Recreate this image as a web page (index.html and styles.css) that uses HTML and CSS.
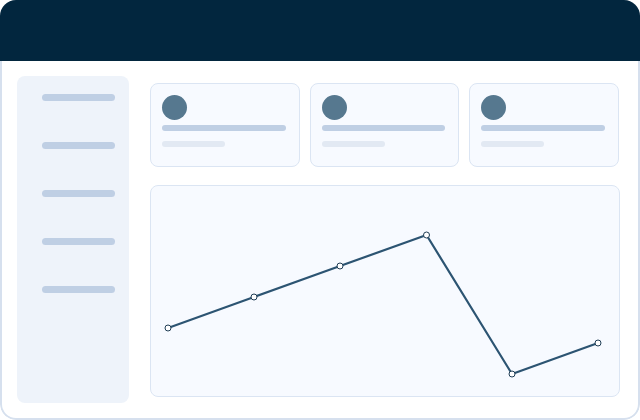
FILE: index.html
```html
<!DOCTYPE html>
<html lang="en">
<head>
<meta charset="utf-8">
<title>Dashboard</title>
<link rel="stylesheet" href="styles.css">
</head>
<body>
<div class="window">
  <header class="topbar"></header>
  <main class="main">
    <nav class="sidebar">
      <span class="nav-item"></span>
      <span class="nav-item"></span>
      <span class="nav-item"></span>
      <span class="nav-item"></span>
      <span class="nav-item"></span>
    </nav>
    <section class="content">
      <div class="stats">
        <div class="stat-card">
          <span class="avatar"></span>
          <span class="line line-main"></span>
          <span class="line line-sub"></span>
        </div>
        <div class="stat-card">
          <span class="avatar"></span>
          <span class="line line-main"></span>
          <span class="line line-sub"></span>
        </div>
        <div class="stat-card">
          <span class="avatar"></span>
          <span class="line line-main"></span>
          <span class="line line-sub"></span>
        </div>
      </div>
      <div class="chart-card">
        <svg class="chart" viewBox="0 0 470 212" width="470" height="212">
          <polyline class="chart-line" points="18,143 104,112 190,81 276.5,50 362,189 448,158"/>
          <g class="chart-dots">
            <circle cx="18" cy="143" r="3"/>
            <circle cx="104" cy="112" r="3"/>
            <circle cx="190" cy="81" r="3"/>
            <circle cx="276.5" cy="50" r="3"/>
            <circle cx="362" cy="189" r="3"/>
            <circle cx="448" cy="158" r="3"/>
          </g>
        </svg>
      </div>
    </section>
  </main>
</div>
</body>
</html>
```
FILE: styles.css
```css
* { box-sizing: border-box; }

html, body {
  margin: 0;
  padding: 0;
  background: #ffffff;
}

.window {
  width: 640px;
  height: 420px;
  display: flex;
  flex-direction: column;
  border-radius: 16px;
  overflow: hidden;
  background: #ffffff;
}

.topbar {
  height: 61px;
  flex: none;
  background: #02263e;
}

.main {
  flex: 1;
  display: flex;
  gap: 21px;
  padding: 15px 18px 15px 15px;
  border: 2px solid #d6e0ee;
  border-top: 0;
  border-radius: 0 0 16px 16px;
}

.sidebar {
  width: 112px;
  flex: none;
  display: flex;
  flex-direction: column;
  gap: 41px;
  padding: 18px 0 0 25px;
  background: #eef3fa;
  border-radius: 8px;
}

.nav-item {
  display: block;
  width: 73px;
  height: 7px;
  border-radius: 4px;
  background: #bfcfe4;
}

.content {
  flex: 1;
  display: flex;
  flex-direction: column;
  gap: 18px;
  padding: 7px 0 6px;
}

.stats {
  display: grid;
  grid-template-columns: repeat(3, 1fr);
  gap: 10px;
  height: 84px;
  margin-right: 1px;
}

.stat-card {
  display: flex;
  flex-direction: column;
  align-items: flex-start;
  padding: 11px 13px 0 11px;
  background: #f7faff;
  border: 1px solid #dbe5f3;
  border-radius: 8px;
}

.avatar {
  display: block;
  width: 25px;
  height: 25px;
  border-radius: 50%;
  background: #56788f;
}

.line {
  display: block;
  height: 6px;
  border-radius: 3px;
}

.line-main {
  width: 100%;
  margin-top: 5px;
  background: #bfcfe4;
}

.line-sub {
  width: 63px;
  margin-top: 10px;
  background: #e2e9f3;
}

.chart-card {
  flex: 1;
  position: relative;
  background: #f7faff;
  border: 1px solid #dbe5f3;
  border-radius: 8px;
}

.chart {
  position: absolute;
  left: -1px;
  top: -1px;
  display: block;
}

.chart-line {
  fill: none;
  stroke: #2c5472;
  stroke-width: 2.2;
  stroke-linejoin: round;
}

.chart-dots circle {
  fill: #ffffff;
  stroke: #1f3d55;
  stroke-width: 1;
}
```
